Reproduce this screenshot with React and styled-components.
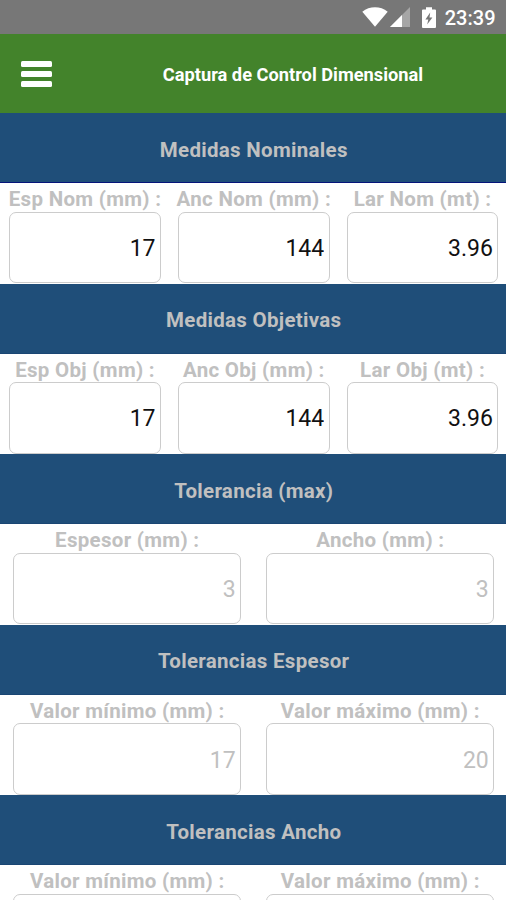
import styled, { createGlobalStyle } from "styled-components"

const GlobalStyle = createGlobalStyle`
    * {
        box-sizing: border-box;
    }

    body {
        margin: 0;
        height: 900px;
        overflow: hidden;
        background: #fff;
        font-family: Roboto, "Liberation Sans", sans-serif;
    }
`

const Screen = styled.div`
    width: 100%;
    height: 900px;
    overflow: hidden;
`

const StatusBar = styled.div`
    display: flex;
    align-items: center;
    justify-content: flex-end;
    height: 34px;
    padding-right: 10.5px;
    background: #777777;
    color: #fff;

    svg {
        display: block;
    }

    .signal {
        margin-left: 2px;
    }

    .battery {
        margin-left: 12px;
    }

    .time {
        margin: 2px 0 0 9px;
        font-size: 20px;
        font-weight: 500;
        line-height: 24px;
    }
`

const Header = styled.header`
    display: flex;
    align-items: center;
    height: 79px;
    padding: 0 22px 0 21px;
    background: #43832b;
    color: #fff;

    h1 {
        flex: 1;
        margin: 2px 0 0 50px;
        font-size: 18.25px;
        font-weight: 700;
        text-align: center;
        white-space: nowrap;
    }
`

const MenuButton = styled.button`
    display: flex;
    flex-direction: column;
    gap: 4px;
    width: 31px;
    margin-top: 1px;
    padding: 0;
    border: none;
    background: transparent;

    span {
        width: 31px;
        height: 6.3px;
        border-radius: 1.5px;
        background: #fff;
    }
`

const Section = styled.section`
    height: 170.6px;
`

const SectionTitle = styled.h2`
    display: flex;
    align-items: center;
    justify-content: center;
    height: 70px;
    margin: 0;
    padding: 4px 0 0 1.5px;
    border-bottom: 1px solid ${({ $line }) => $line || "#1a4673"};
    background: #1f4e79;
    color: #c0c0c0;
    font-size: 20.5px;
    font-weight: 700;
    letter-spacing: 0.3px;
`

const Fields = styled.div`
    display: flex;
    margin-right: -0.9px;
    padding-left: 0.7px;
`

const Field = styled.label`
    flex: 1 1 0;
    min-width: 0;
    display: flex;
    flex-direction: column;
    align-items: center;
    padding-top: 4px;

    span {
        height: 24.6px;
        color: #c0c0c0;
        font-size: 20.5px;
        font-weight: 700;
        line-height: 25px;
        letter-spacing: 0.3px;
        white-space: nowrap;
    }

    input {
        width: 90%;
        height: 71.6px;
        padding: 2px 4.5px 0;
        border: 1.5px solid #cccccc;
        border-radius: 7px;
        outline: none;
        background: #fff;
        color: #111;
        font-family: inherit;
        font-size: 23px;
        text-align: right;
    }

    input:disabled {
        color: #c0c0c0;
    }
`

const sections = [
    {
        title: "Medidas Nominales",
        line: "#05147a",
        fields: [
            { label: "Esp Nom (mm) :", value: "17" },
            { label: "Anc Nom (mm) :", value: "144" },
            { label: "Lar Nom (mt) :", value: "3.96" },
        ],
    },
    {
        title: "Medidas Objetivas",
        fields: [
            { label: "Esp Obj (mm) :", value: "17" },
            { label: "Anc Obj (mm) :", value: "144" },
            { label: "Lar Obj (mt) :", value: "3.96" },
        ],
    },
    {
        title: "Tolerancia (max)",
        disabled: true,
        fields: [
            { label: "Espesor (mm) :", value: "3" },
            { label: "Ancho (mm) :", value: "3" },
        ],
    },
    {
        title: "Tolerancias Espesor",
        disabled: true,
        fields: [
            { label: "Valor mínimo (mm) :", value: "17" },
            { label: "Valor máximo (mm) :", value: "20" },
        ],
    },
    {
        title: "Tolerancias Ancho",
        disabled: true,
        fields: [
            { label: "Valor mínimo (mm) :", value: "" },
            { label: "Valor máximo (mm) :", value: "" },
        ],
    },
]

const StatusIcons = () => (
    <>
        <svg width="26" height="20" viewBox="0 0 26 20" fill="#fff">
            <path d="M0.3 4.7C7.5 -1.1 18.5 -1.1 25.7 4.7L13 19.8Z" />
        </svg>
        <svg className="signal" width="20" height="20" viewBox="0 0 20 20" fill="#fff">
            <path d="M20 0V20H0Z" opacity="0.35" />
            <path d="M12 8V20H0Z" />
        </svg>
        <svg className="battery" width="14" height="21" viewBox="0 0 14 21">
            <path
                d="M1 2.5H4V0.3H10V2.5H13Q14 2.5 14 3.5V20Q14 21 13 21H1Q0 21 0 20V3.5Q0 2.5 1 2.5Z"
                fill="#fff"
            />
            <path d="M8.2 5.5L3.4 12.4H6.3L5.2 17.5L10.4 10.4H7.5Z" fill="#777" />
        </svg>
    </>
)

const App = () => {
    return (
        <>
            <GlobalStyle />
            <Screen>
                <StatusBar>
                    <StatusIcons />
                    <span className="time">23:39</span>
                </StatusBar>
                <Header>
                    <MenuButton aria-label="Menu">
                        <span />
                        <span />
                        <span />
                    </MenuButton>
                    <h1>Captura de Control Dimensional</h1>
                </Header>
                {sections.map(({ title, line, disabled, fields }) => (
                    <Section key={title}>
                        <SectionTitle $line={line}>{title}</SectionTitle>
                        <Fields>
                            {fields.map(({ label, value }) => (
                                <Field key={label}>
                                    <span>{label}</span>
                                    <input defaultValue={value} disabled={disabled} />
                                </Field>
                            ))}
                        </Fields>
                    </Section>
                ))}
            </Screen>
        </>
    )
}

export default App
